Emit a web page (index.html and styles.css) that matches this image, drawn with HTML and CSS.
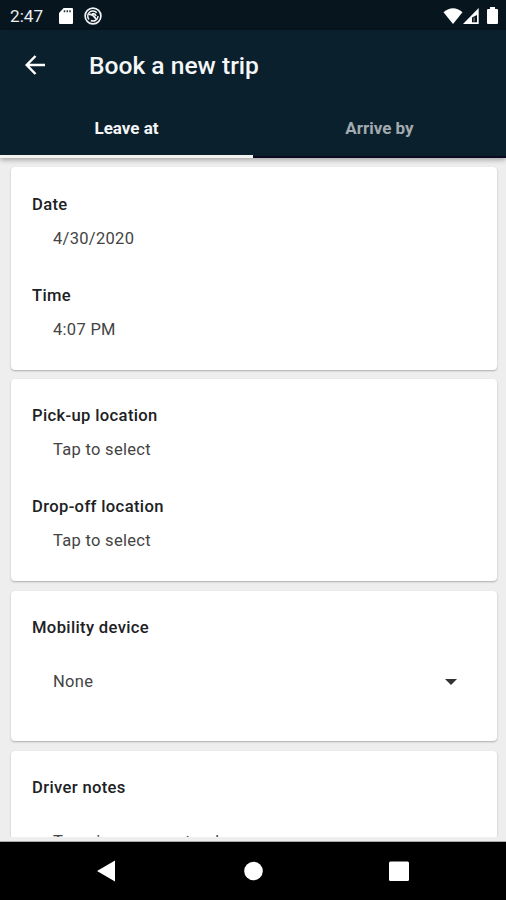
FILE: index.html
```html
<!DOCTYPE html>
<html lang="en">
<head>
<meta charset="utf-8">
<title>Book a new trip</title>
<link rel="stylesheet" href="styles.css">
</head>
<body>
<div class="status-bar">
  <span class="clock">2:47</span>
  <svg class="sd" viewBox="0 0 14 16"><path d="M4.7 0H13q1 0 1 1v14q0 1-1 1H1q-1 0-1-1V5z" fill="#fff"/><path d="M5.5 2.3v2M8.3 2.3v2M11 2.3v2" stroke="#26343f" stroke-width="1.5"/></svg>
  <svg class="sync" viewBox="0 0 18 18" fill="none" stroke="#f0f2f3"><circle cx="9" cy="9" r="7.9" stroke-width="1.7"/><path d="M5 12.5A5 5 0 0 1 12.8 5.7M14 9a5 5 0 0 1-7.2 4.5" stroke-width="1.5"/><path d="M4.5 7.5q4-1 7.5 4.5M8 7q3-1 4 2" stroke-width="1.8"/></svg>
  <div class="signals">
    <svg class="wifi" viewBox="0 0 20 16"><path d="M.5 4.3Q10-4 19.5 4.3L10 16z" fill="#fff"/></svg>
    <svg class="cell" viewBox="0 0 16 16"><path d="M15.7 0V16H0z" fill="#fff"/><path d="M14 7v7.3H9V9.5z" fill="#07131d"/><path d="M11 9.5v4" stroke="#bbb" stroke-width=".8"/></svg>
    <svg class="battery" viewBox="0 0 11 17"><path d="M3 0h5v2h2q1 0 1 1v13q0 1-1 1H1q-1 0-1-1V3q0-1 1-1h2z" fill="#fff"/></svg>
  </div>
</div>
<header class="app-bar">
  <div class="toolbar">
    <svg class="back" viewBox="0 0 20 20" fill="none" stroke="#fff" stroke-width="2.5"><path d="M20 10H2M10.5 1L1.7 10l8.8 9"/></svg>
    <h1>Book a new trip</h1>
  </div>
  <nav class="tabs">
    <span class="tab active">Leave at</span>
    <span class="tab">Arrive by</span>
  </nav>
</header>
<main class="form">
  <section class="card when">
    <h2>Date</h2><p>4/30/2020</p>
    <h2>Time</h2><p>4:07 PM</p>
  </section>
  <section class="card">
    <h2>Pick-up location</h2><p>Tap to select</p>
    <h2>Drop-off location</h2><p>Tap to select</p>
  </section>
  <section class="card device">
    <h2>Mobility device</h2>
    <div class="select"><span>None</span><svg class="caret" viewBox="0 0 12 6"><path d="M0 0h12L6 6z" fill="#333"/></svg></div>
  </section>
  <section class="card notes">
    <h2>Driver notes</h2>
    <p>Type in some notes here</p>
  </section>
</main>
<div class="edge"></div>
<footer class="nav-bar">
  <svg viewBox="0 0 24 24"><path d="M21 1.5v21L3 12z" fill="#fff"/></svg>
  <svg viewBox="0 0 24 24"><circle cx="12.5" cy="12" r="9.3" fill="#fff"/></svg>
  <svg viewBox="0 0 24 24"><rect x="2" y="2.5" width="20" height="19.5" rx="1.5" fill="#fff"/></svg>
</footer>
</body>
</html>
```
FILE: styles.css
```css
* { box-sizing: border-box; }
body { margin: 0; height: 900px; display: flex; flex-direction: column; overflow: hidden; background: #eee; font-family: Roboto, sans-serif; }
svg { display: block; flex: none; }
h1, h2, p { margin: 0; }
.status-bar { height: 30px; flex: none; display: flex; align-items: center; padding: 1px 8px 0 10px; background: #07151f; color: #eceeef; }
.clock { width: 49px; font-size: 17.2px; line-height: 20px; }
.sd { width: 14px; height: 16px; margin-right: 11px; }
.sync { width: 18px; height: 18px; }
.signals { display: flex; align-items: center; margin-left: auto; }
.wifi { width: 20px; height: 16px; }
.cell { width: 16px; height: 16px; margin-right: 8px; }
.battery { width: 11px; height: 17px; }
.app-bar { height: 128px; flex: none; position: relative; z-index: 1; background: #0a202d; box-shadow: 0 2px 5px rgba(0,0,0,.3); }
.toolbar { height: 70px; display: flex; align-items: center; padding-left: 25px; }
.back { width: 20px; height: 20px; margin-right: 44px; }
h1 { color: #f5f6f7; font-size: 24.6px; line-height: 30px; font-weight: 500; padding-top: 1px; }
.tabs { display: flex; height: 58px; }
.tab { flex: 1; text-align: center; color: #a4abb0; font-size: 17px; font-weight: 700; line-height: 20px; padding-top: 18px; border-bottom: 2px solid #0a0b23; }
.tab.active { color: #f5f6f7; border-bottom: 3px solid #f3f3f0; }
.form { height: 679px; flex: none; overflow: hidden; display: flex; flex-direction: column; gap: 9px; padding: 9px 9px 0 11px; }
.card { height: 202px; flex: none; padding: 27px 21px; background: #fff; border-radius: 4px; box-shadow: 0 1px 2px rgba(0,0,0,.28); }
.card.when { height: 203px; padding-top: 28px; }
.card h2 { color: #202124; font-size: 16.6px; line-height: 20px; font-weight: 500; letter-spacing: .35px; }
.card p, .select { color: #444; font-size: 16.5px; line-height: 20px; letter-spacing: .3px; }
.card p { padding: 0 21px; margin: 14px 0 37px; }
.card.device { height: 150px; }
.card.device, .card.notes { margin-top: 1px; }
.select { display: flex; align-items: center; justify-content: space-between; padding: 0 19px 0 21px; margin-top: 34px; }
.caret { width: 12px; height: 6px; }
.card.notes p { margin-top: 34px; letter-spacing: .6px; word-spacing: 1px; }
.edge { height: 5px; flex: none; background: #eee; border-bottom: 1px solid #aaa; }
.nav-bar { flex: 1; display: flex; justify-content: space-between; align-items: center; padding: 0 95px 0 94px; background: #000; }
.nav-bar svg { width: 24px; height: 24px; }
```
